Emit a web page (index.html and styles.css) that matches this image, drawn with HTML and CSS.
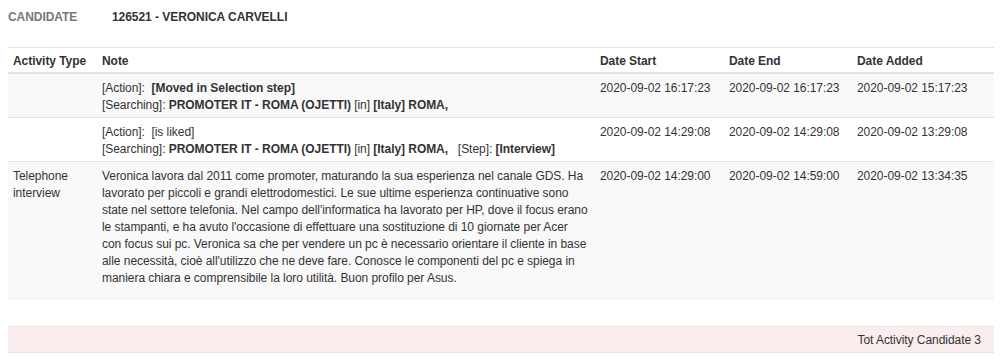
FILE: index.html
```html
<!DOCTYPE html>
<html lang="it">
<head>
<meta charset="utf-8">
<title>Candidate activities</title>
<link rel="stylesheet" href="styles.css">
</head>
<body>
<div class="candidate">
  <span class="candidate-label">CANDIDATE</span>
  <span class="candidate-name">126521 - VERONICA CARVELLI</span>
</div>

<table class="activities">
  <colgroup>
    <col class="col-type">
    <col class="col-note">
    <col class="col-start">
    <col class="col-end">
    <col class="col-added">
  </colgroup>
  <thead>
    <tr>
      <th>Activity Type</th>
      <th>Note</th>
      <th>Date Start</th>
      <th>Date End</th>
      <th>Date Added</th>
    </tr>
  </thead>
  <tbody>
    <tr>
      <td></td>
      <td>[Action]:&nbsp; <b>[Moved in Selection step]</b><br>[Searching]: <b>PROMOTER IT - ROMA (OJETTI)</b> [in] <b>[Italy] ROMA,</b></td>
      <td>2020-09-02 16:17:23</td>
      <td>2020-09-02 16:17:23</td>
      <td>2020-09-02 15:17:23</td>
    </tr>
    <tr>
      <td></td>
      <td>[Action]:&nbsp; [is liked]<br>[Searching]: <b>PROMOTER IT - ROMA (OJETTI)</b> [in] <b>[Italy] ROMA,</b> &nbsp; [Step]: <b>[Interview]</b></td>
      <td>2020-09-02 14:29:08</td>
      <td>2020-09-02 14:29:08</td>
      <td>2020-09-02 13:29:08</td>
    </tr>
    <tr>
      <td>Telephone interview</td>
      <td><p class="note-text">Veronica lavora dal 2011 come promoter, maturando la sua esperienza nel canale GDS. Ha lavorato per piccoli e grandi elettrodomestici. Le sue ultime esperienza continuative sono state nel settore telefonia. Nel campo dell'informatica ha lavorato per HP, dove il focus erano le stampanti, e ha avuto l'occasione di effettuare una sostituzione di 10 giornate per Acer con focus sui pc. Veronica sa che per vendere un pc è necessario orientare il cliente in base alle necessità, cioè all'utilizzo che ne deve fare. Conosce le componenti del pc e spiega in maniera chiara e comprensibile la loro utilità. Buon profilo per Asus.</p></td>
      <td>2020-09-02 14:29:00</td>
      <td>2020-09-02 14:59:00</td>
      <td>2020-09-02 13:34:35</td>
    </tr>
  </tbody>
</table>

<table class="totals">
  <tr>
    <td>Tot Activity Candidate 3</td>
  </tr>
</table>
</body>
</html>
```

FILE: styles.css
```css
body {
  margin: 8px;
  font-family: "Liberation Sans", Arial, sans-serif;
  font-size: 12px;
  line-height: 17px;
  letter-spacing: -0.05px;
  color: #333;
  background: #fff;
}

.candidate {
  display: flex;
  font-weight: bold;
  margin-top: 1px;
  margin-bottom: 21px;
}

.candidate-label {
  width: 104px;
  color: #777;
}

.candidate-name {
  color: #333;
}

table {
  border-collapse: collapse;
  border-spacing: 0;
  width: 988px;
  table-layout: fixed;
}

.col-type { width: 89px; }
.col-note { width: 498px; }
.col-start { width: 129px; }
.col-end { width: 128px; }
.col-added { width: 144px; }

.activities th,
.activities td {
  padding: 6px 5px 3px;
  text-align: left;
  vertical-align: top;
  border-top: 1px solid #e3e3e3;
}

.activities thead th {
  font-weight: bold;
  border-bottom: 2px solid #e3e3e3;
  padding-top: 5px;
  padding-bottom: 2px;
}

.activities tbody tr:nth-child(odd) {
  background: #f9f9f9;
}

.activities b {
  font-weight: bold;
}

.note-text {
  margin: 0 0 10px;
}

.totals {
  margin-top: 26px;
}

.totals td {
  background: #f9eded;
  border-top: 1px solid #efe3e3;
  border-bottom: 1px solid #efe3e3;
  padding: 5px 15px 3px 5px;
  text-align: right;
}
```
